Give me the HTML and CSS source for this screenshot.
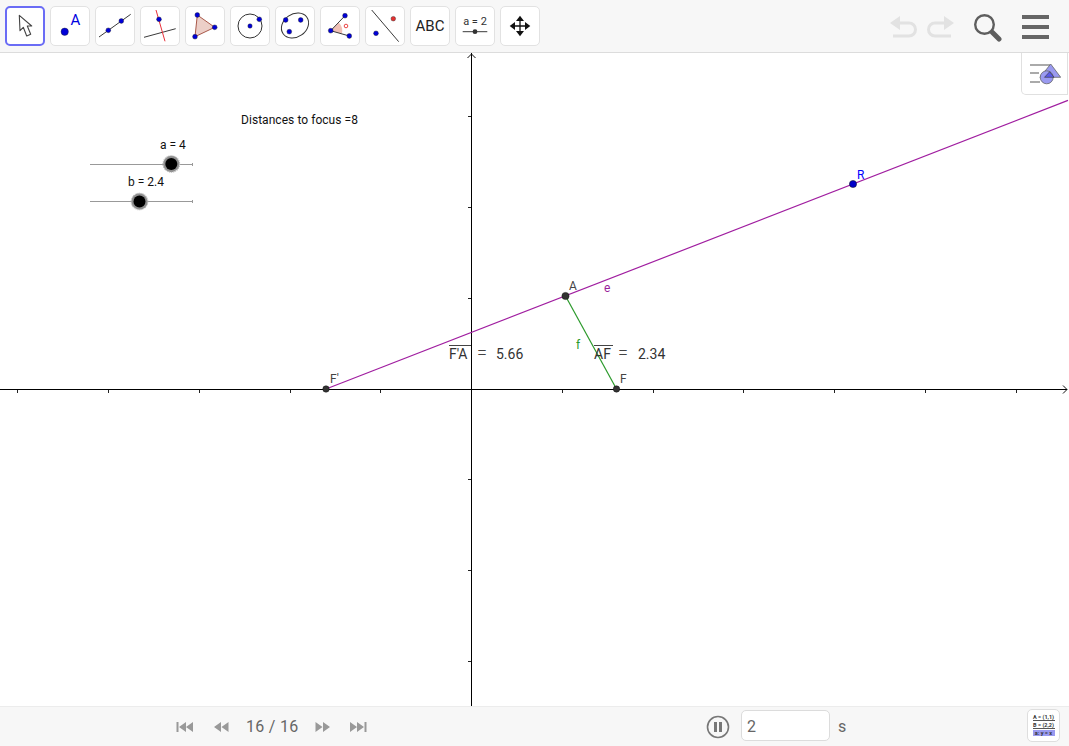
FILE: index.html
```html
<!DOCTYPE html>
<html lang="en">
<head>
<meta charset="utf-8">
<title>GeoGebra</title>
<link rel="stylesheet" href="styles.css">
</head>
<body>
<div class="app">
  <header class="toolbar">
    <div class="tools">
      <div class="tool active"><svg viewBox="0 0 40 40"><path class="arrow" d="M14.3 9.3 L15 24.7 L18.3 21.3 L21.7 30 L25.7 28.3 L22.3 20 L26.7 20 Z"/></svg></div>
      <div class="tool"><svg viewBox="0 0 40 40"><circle class="pt big" cx="14.7" cy="25.7" r="3.7"/><text class="icon-a" x="20.5" y="19.2">A</text></svg></div>
      <div class="tool"><svg viewBox="0 0 40 40"><line class="ln" x1="4" y1="31" x2="35.7" y2="8.3"/><circle class="pt" cx="13.3" cy="24.3" r="2.4"/><circle class="pt" cx="26.3" cy="15" r="2.4"/></svg></div>
      <div class="tool"><svg viewBox="0 0 40 40"><line class="ln" x1="4" y1="31.3" x2="35.7" y2="22.7"/><line class="ln red" x1="16" y1="4" x2="25" y2="35.3"/><circle class="pt" cx="19" cy="13.3" r="2.4"/></svg></div>
      <div class="tool"><svg viewBox="0 0 40 40"><path class="poly" d="M12.3 9 L29.7 21.3 L10 30.7 Z"/><circle class="pt" cx="12.3" cy="9" r="2.4"/><circle class="pt" cx="29.7" cy="21.3" r="2.4"/><circle class="pt" cx="10" cy="30.7" r="2.4"/></svg></div>
      <div class="tool"><svg viewBox="0 0 40 40"><circle class="ring" cx="20" cy="20" r="12"/><circle class="pt" cx="20" cy="20" r="2.2"/><circle class="pt" cx="29.3" cy="13.3" r="2.4"/></svg></div>
      <div class="tool"><svg viewBox="0 0 40 40"><ellipse class="ring" cx="20" cy="19.5" rx="14.5" ry="11.5" transform="rotate(-35 20 19.5)"/><circle class="pt" cx="10.7" cy="14" r="2.4"/><circle class="pt" cx="25.7" cy="14" r="2.4"/><circle class="pt" cx="14.3" cy="25.7" r="2.4"/></svg></div>
      <div class="tool"><svg viewBox="0 0 40 40"><path class="wedge" d="M10.7 24.7 L18.6 16.4 A11.5 11.5 0 0 1 21.8 27.8 Z"/><path class="ln" d="M25 9.7 L10.7 24.7 L29.3 30"/><circle class="red-ring" cx="26" cy="20" r="1.8"/><circle class="pt" cx="10.7" cy="24.7" r="2.4"/><circle class="pt" cx="25" cy="9.7" r="2.4"/><circle class="pt" cx="29.3" cy="30" r="2.4"/></svg></div>
      <div class="tool"><svg viewBox="0 0 40 40"><line class="ln" x1="6.7" y1="4" x2="33.7" y2="35.7"/><circle class="pt rd" cx="28.3" cy="12.7" r="2.3"/><circle class="pt" cx="11" cy="27.3" r="2.4"/></svg></div>
      <div class="tool"><span class="abc">ABC</span></div>
      <div class="tool"><svg viewBox="0 0 40 40"><text class="slider-t" x="20" y="19">a = 2</text><line class="ln" x1="7.7" y1="25.7" x2="32.3" y2="25.7"/><circle class="knob-small" cx="20" cy="25.7" r="2.4"/></svg></div>
      <div class="tool"><svg viewBox="0 0 40 40"><path class="ln thick" d="M20 12 V28 M12 20 H28"/><path class="solid" d="M20 9.7 L16 15 H24 Z M20 30.3 L16 25 H24 Z M9.7 20 L15 16 V24 Z M30.3 20 L25 16 V24 Z"/></svg></div>
    </div>
    <div class="actions">
      <svg class="hist" viewBox="0 0 28 24"><path class="hist-line" d="M6 8 H19 A6.5 6.5 0 0 1 19 21 H3"/><path class="hist-fill" d="M0 8 L10 1 V15 Z"/></svg>
      <svg class="hist" viewBox="0 0 28 24"><path class="hist-line" d="M22 8 H9 A6.5 6.5 0 0 0 9 21 H25"/><path class="hist-fill" d="M28 8 L18 1 V15 Z"/></svg>
      <svg class="search" viewBox="0 0 29 29"><circle class="lens" cx="11.5" cy="11.5" r="9.3"/><path class="handle" d="M19.5 19.5 L26 26"/></svg>
      <div class="menu"><i></i><i></i><i></i></div>
    </div>
  </header>

  <main class="canvas">
    <svg class="plot" viewBox="0 53 1069 653">
      <g class="axis">
        <line x1="0" y1="389.5" x2="1067" y2="389.5"/>
        <line x1="471.5" y1="53" x2="471.5" y2="706"/>
        <path d="M1063 385.5 L1067 389.5 L1063 393.5 M467.5 58 L471.5 54 L475.5 58"/>
      </g>
      <path class="ticks" d="M17.5 390v3M108.5 390v3M199.5 390v3M290.5 390v3M380.5 390v3M562.5 390v3M653.5 390v3M743.5 390v3M834.5 390v3M925.5 390v3M1016.5 390v3M468 116.5h3M468 207.5h3M468 298.5h3M468 479.5h3M468 570.5h3M468 661.5h3"/>

      <line class="seg-e" x1="326" y1="389" x2="1068" y2="100.4"/>
      <line class="seg-f" x1="565.5" y1="296" x2="616.5" y2="389"/>

      <text class="label wide" x="241" y="124">Distances to focus =8</text>

      <text class="label" x="160" y="149">a = 4</text>
      <path class="slide" d="M90 164.5 H192 M192.5 163 V166"/>
      <circle class="knob-halo" cx="171.3" cy="164" r="8.3"/>
      <circle class="knob" cx="171.3" cy="164" r="6"/>

      <text class="label" x="128" y="186">b = 2.4</text>
      <path class="slide" d="M90 201.5 H192 M192.5 200 V203"/>
      <circle class="knob-halo" cx="139.5" cy="201.5" r="8.3"/>
      <circle class="knob" cx="139.5" cy="201.5" r="6"/>

      <circle class="gp" cx="326" cy="389" r="3.2"/>
      <circle class="gp" cx="616.5" cy="389" r="3.2"/>
      <circle class="gp" cx="565.5" cy="296" r="3.6"/>
      <circle class="bp" cx="853" cy="184" r="3.6"/>

      <text class="lab-g" x="330" y="383">F'</text>
      <text class="lab-g" x="620" y="383">F</text>
      <text class="lab-g" x="569" y="290">A</text>
      <text class="lab-b" x="857" y="179">R</text>
      <text class="lab-e" x="604" y="292">e</text>
      <text class="lab-f" x="576" y="349">f</text>

      <line class="bar" x1="449" y1="345.5" x2="471" y2="345.5"/>
      <text class="math" x="449" y="358.5">F'A</text>
      <text class="math eq" x="477" y="359">=</text>
      <text class="math" x="496" y="358.5">5.66</text>
      <line class="bar" x1="594" y1="345.5" x2="613" y2="345.5"/>
      <text class="math" x="594" y="358.5">AF</text>
      <text class="math eq" x="618" y="359">=</text>
      <text class="math" x="638" y="358.5">2.34</text>
    </svg>
    <div class="stylebar">
      <svg viewBox="0 0 32 24"><path class="sb-lines" d="M1 3 H21 M1 11 H10 M1 20 H11"/><path class="sb-shape" d="M21.7 2 L31.7 15.3 H11 Z"/><circle class="sb-shape" cx="17.7" cy="15.3" r="6.5"/><path class="sb-over" d="M20.7 9.7 L25 15.3 H15.5 Z"/></svg>
    </div>
  </main>

  <footer class="player">
    <div class="nav">
      <svg class="nav-i" viewBox="0 0 18 12"><path d="M0.5 1 H2.5 V11 H0.5 Z M10 1 V11 L3 6 Z M17 1 V11 L10 6 Z"/></svg>
      <svg class="nav-i" viewBox="0 0 18 12"><path d="M9 1 V11 L2 6 Z M16.5 1 V11 L9.5 6 Z"/></svg>
      <span class="count">16 / 16</span>
      <svg class="nav-i tight" viewBox="0 0 18 12"><path d="M1.5 1 V11 L8.5 6 Z M9 1 V11 L16 6 Z"/></svg>
      <svg class="nav-i" viewBox="0 0 18 12"><path d="M1 1 V11 L8 6 Z M8 1 V11 L15 6 Z M15.5 1 H17.5 V11 H15.5 Z"/></svg>
    </div>
    <div class="speed">
      <svg class="pause" viewBox="0 0 24 24"><circle cx="12" cy="12" r="10.5"/><path d="M8 7 H11 V17 H8 Z M13 7 H16 V17 H13 Z"/></svg>
      <div class="field">2</div>
      <span class="unit">s</span>
    </div>
    <div class="algebra">
      <div class="alg-line rule">A = (1,1)</div>
      <div class="alg-line rule">B = (2,2)</div>
      <div class="alg-line hl">a: y = x</div>
    </div>
  </footer>
</div>
</body>
</html>
```
FILE: styles.css
```css
* { box-sizing: border-box; }
html, body { margin: 0; padding: 0; height: 100%; background: #fff; overflow: hidden; }
body { font-family: Roboto, "Liberation Sans", sans-serif; }
.app { width: 1069px; height: 746px; display: flex; flex-direction: column; }

.toolbar { height: 53px; flex: none; display: flex; align-items: flex-start; justify-content: space-between; padding: 6px 20px 0 5px; background: #f7f7f7; border-bottom: 1px solid #dcdcdc; }
.tools { display: flex; gap: 5px; }
.tool { width: 40px; height: 40px; display: flex; align-items: center; justify-content: center; background: #fff; border: 1px solid #e2e2e2; border-radius: 5px; }
.tool svg { width: 40px; height: 40px; display: block; flex: none; }
.tool.active { border: 2px solid #6a6cf5; }
.abc { font-size: 15px; color: #222; letter-spacing: 0.1px; }

.pt { fill: #0000d8; stroke: #222; stroke-width: 0.4; }
.pt.rd { fill: #e53030; }
.ln { stroke: #3a3a3a; stroke-width: 1; fill: none; }
.ln.red { stroke: #e8303a; }
.ln.thick { stroke: #111; stroke-width: 1.3; }
.ring { fill: none; stroke: #333; stroke-width: 1; }
.arrow { fill: #fff; stroke: #444; stroke-width: 1.1; stroke-linejoin: round; }
.icon-a { font: 15px Roboto, sans-serif; fill: #0000e0; }
.poly { fill: #eccfc8; stroke: #a9594a; stroke-width: 1; }
.wedge { fill: #f0c0b5; stroke: none; }
.red-ring { fill: none; stroke: #e83030; stroke-width: 0.9; }
.slider-t { font: 11px Roboto, sans-serif; fill: #333; text-anchor: middle; }
.knob-small { fill: #333; }
.solid { fill: #111; }

.actions { display: flex; align-items: center; height: 40px; margin-top: 1px; }
.hist { width: 28px; height: 24px; margin-right: 8px; display: block; }
.hist-line { fill: none; stroke: #e2e2e2; stroke-width: 3; }
.hist-fill { fill: #e2e2e2; }
.search { width: 29px; height: 29px; margin: 0 20px 0 11px; display: block; }
.lens { fill: none; stroke: #5e5e5e; stroke-width: 2.4; }
.handle { stroke: #5e5e5e; stroke-width: 5; stroke-linecap: round; }
.menu { width: 27px; display: flex; flex-direction: column; gap: 6.5px; }
.menu i { display: block; height: 3.5px; background: #666; }

.canvas { flex: 1; position: relative; background: #fff; min-height: 0; }
.plot { width: 1069px; height: 653px; display: block; }
.axis line { stroke: #000; stroke-width: 1; }
.axis path { stroke: #111; stroke-width: 1; fill: none; }
.ticks { stroke: #222; stroke-width: 1; fill: none; }
.seg-e { stroke: #a01ea0; stroke-width: 1.2; }
.seg-f { stroke: #2a992a; stroke-width: 1.2; }
.label { font: 12px Roboto, sans-serif; fill: #111; }
.label.wide { letter-spacing: 0.05px; }
.slide { stroke: #999; stroke-width: 1; fill: none; }
.knob-halo { fill: #8e8e8e; stroke: #bbb; stroke-width: 1.2; stroke-dasharray: 1 1; }
.knob { fill: #000; }
.gp { fill: #333; stroke: #111; stroke-width: 0.5; }
.bp { fill: #0000c8; stroke: #111; stroke-width: 0.5; }
.lab-g { font: 12px Roboto, sans-serif; fill: #444; }
.lab-b { font: 12px Roboto, sans-serif; fill: #0000ff; }
.lab-e { font: 12px Roboto, sans-serif; fill: #9b1e9b; }
.lab-f { font: 12px Roboto, sans-serif; fill: #2a992a; }
.math { font: 400 14px Roboto, sans-serif; fill: #333; }
.math.eq { font-size: 18px; font-weight: 300; fill: #444; }
.bar { stroke: #444; stroke-width: 1; }

.stylebar { position: absolute; top: 0; right: 1px; width: 47px; height: 42px; background: #fff; border: 1px solid #e0e0e0; border-top: 0; border-radius: 0 0 0 5px; display: flex; align-items: center; justify-content: center; }
.stylebar svg { width: 32px; height: 24px; display: block; }
.sb-lines { stroke: #aaa; stroke-width: 2; fill: none; }
.sb-shape { fill: #9a9af0; stroke: #666; stroke-width: 0.8; }
.sb-over { fill: #5a5ae8; stroke: #333; stroke-width: 0.6; }

.player { height: 40px; flex: none; position: relative; display: flex; align-items: center; background: #f7f7f7; border-top: 1px solid #ececec; padding: 0 9px 0 176px; }
.nav { display: flex; align-items: center; width: 530px; }
.nav-i { width: 18px; height: 12px; display: block; fill: #999; margin-right: 18px; }
.nav-i.tight { margin-right: 17px; }
.nav-i + .count { margin-left: -2px; }
.count { font-size: 16px; color: #666; letter-spacing: 0.3px; width: 68px; }
.speed { display: flex; align-items: center; width: 321px; }
.pause { width: 24px; height: 24px; display: block; margin-right: 11px; }
.pause circle { fill: none; stroke: #777; stroke-width: 1.6; }
.pause path { fill: #777; }
.field { width: 89px; height: 31px; margin-top: -2px; background: #fff; border: 1px solid #dcdcdc; border-radius: 5px; font-size: 16px; color: #666; padding: 6px 5px; }
.unit { font-size: 16px; color: #666; margin-left: 8px; }
.algebra { width: 33px; height: 33px; margin-top: -3px; background: #fff; border: 1px solid #dedede; border-radius: 5px; display: flex; flex-direction: column; align-items: center; justify-content: center; gap: 1px; }
.alg-line { width: 22px; font-size: 5.5px; line-height: 6px; text-align: center; color: #333; font-weight: 700; white-space: nowrap; }
.alg-line.rule { border-bottom: 1px solid #555; }
.alg-line.hl { background: #9a9af0; }
```
